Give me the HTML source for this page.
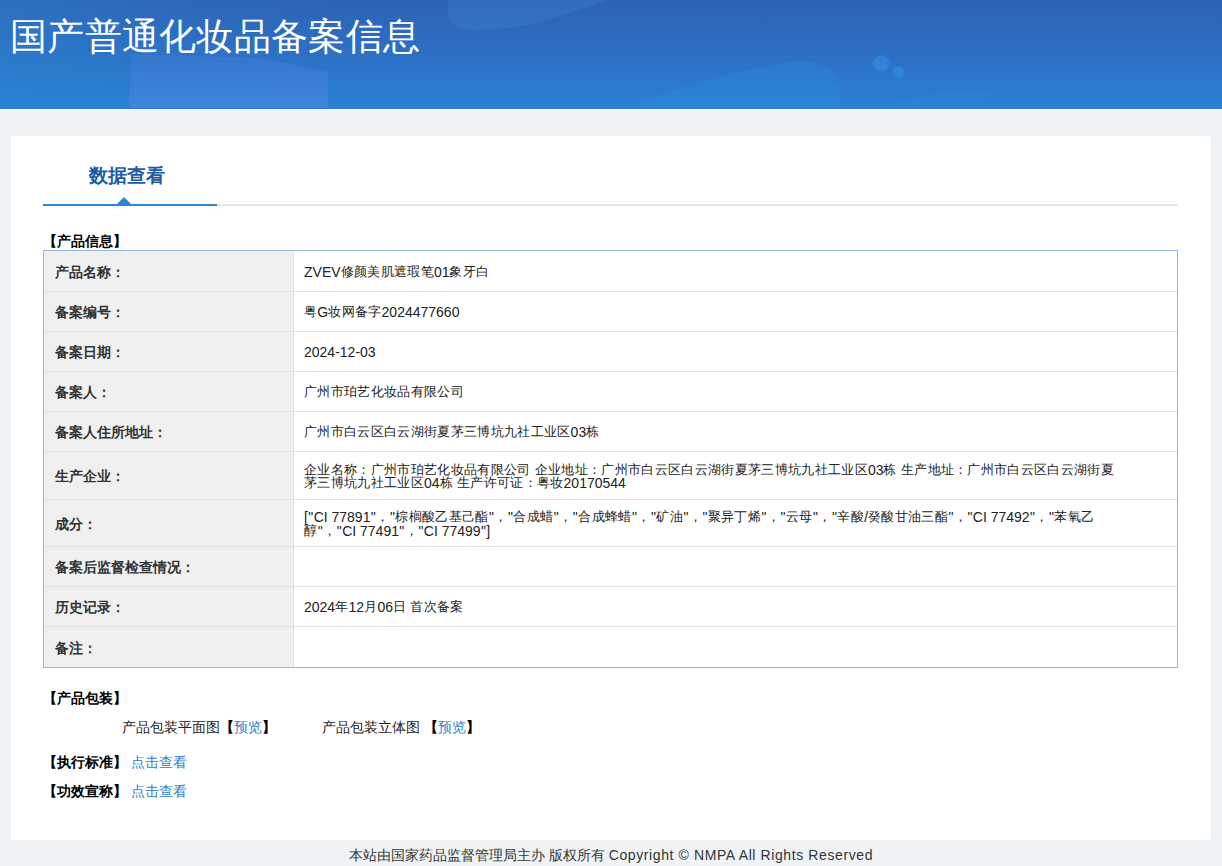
<!DOCTYPE html>
<html><head><meta charset="utf-8">
<style>
*{margin:0;padding:0;box-sizing:border-box}
html,body{width:1222px;height:866px;overflow:hidden}
body{background:#eff3f6;font-family:"Liberation Sans",sans-serif;color:#333;position:relative}
#hd{position:absolute;left:0;top:0;width:1222px;height:109px;border-bottom:1px solid #2a7ad8;background:linear-gradient(90deg,rgba(40,135,210,0.38) 0px,rgba(40,135,210,0.12) 200px,rgba(40,135,210,0) 420px),linear-gradient(180deg,#2e61b4 0%,#2d6fc4 50%,#2a80d4 100%);overflow:hidden}
#hd h1{position:absolute;left:10px;top:15px;font-size:37px;font-weight:500;color:#fff;line-height:44px;white-space:nowrap;letter-spacing:0.3px}
.sh{position:absolute}
#panel{position:absolute;left:11px;top:136px;width:1200px;height:704px;background:#fff}
#tab{position:absolute;left:89px;top:163px;font-size:19px;font-weight:bold;color:#1b5ca8;line-height:26px;white-space:nowrap}
#tabline{position:absolute;left:43px;top:204px;width:1135px;height:2px;background:#e6e6e6}
#tabact{position:absolute;left:43px;top:204px;width:174px;height:2px;background:#2c85d6}
#tri{position:absolute;left:117px;top:197px;width:0;height:0;border-left:7px solid transparent;border-right:7px solid transparent;border-bottom:7px solid #2c85d6}
.sec{position:absolute;font-size:14px;font-weight:bold;color:#000;line-height:20px;white-space:nowrap}
#tbl{position:absolute;left:43px;top:250px;width:1135px;height:418px;border:1px solid #93b6e3;background:#fff}
#lcol{position:absolute;left:44px;top:251px;width:249px;height:416px;background:#f0f0f0}
#vdiv{position:absolute;left:293px;top:251px;width:1px;height:416px;background:#e2e2e2}
.row{position:absolute;left:44px;width:1133px}
.row .l{position:absolute;left:11px;top:0;bottom:1px;display:flex;align-items:center;font-size:14px;font-weight:bold;color:#333;white-space:nowrap;line-height:14px;padding-top:2px}
.row .v{position:absolute;left:260px;top:0;bottom:1px;display:flex;align-items:center;font-size:13.33px;letter-spacing:0.33px;color:#222;white-space:nowrap;line-height:13.33px;padding-top:2px}
.lt{font-size:14px;letter-spacing:0;position:relative;top:1px}
.q{padding:0 .38px}
.rl{position:absolute;left:44px;width:1133px;height:1px;background:#e2e2e2}
.lnk{color:#2f80d2}
#foot{position:absolute;left:0;top:845px;width:1222px;text-align:center;font-size:14px;line-height:20px;color:#333;white-space:nowrap}
#foot span{letter-spacing:0.6px}
</style></head><body>
<div id="hd">
<svg class="sh" style="left:0;top:0" width="1222" height="108" viewBox="0 0 1222 108">
<defs><linearGradient id="g1" x1="0" y1="0" x2="0" y2="1"><stop offset="0" stop-color="rgb(90,130,230)" stop-opacity="0.22"/><stop offset="1" stop-color="rgb(90,140,235)" stop-opacity="0.42"/></linearGradient></defs>
<path d="M131,54 L262,58 L328,72 L328,108 L129,108 Z" fill="url(#g1)"/>
<path d="M448,0 L448,14 Q450,30 478,30 Q520,30 560,16 L610,0 Z" fill="rgba(60,135,215,0.28)"/>
<path d="M630,108 Q700,76 790,62 Q838,58 840,88 L840,108 Z" fill="rgba(50,150,225,0.22)"/>
<path d="M880,108 Q930,88 990,92 L985,108 Z" fill="rgba(50,150,225,0.10)"/>
<circle cx="881" cy="63.5" r="8" fill="rgba(55,150,240,0.45)"/>
<circle cx="898.5" cy="72.5" r="6" fill="rgba(55,150,240,0.45)"/>
</svg>
<h1>国产普通化妆品备案信息</h1>
</div>
<div style="position:absolute;left:0;top:109px;width:1222px;height:1px;background:#fbfcfd"></div>
<div id="panel"></div>
<div id="tab">数据查看</div>
<div id="tabline"></div><div id="tabact"></div><div id="tri"></div>
<div class="sec" style="left:43px;top:231px">【产品信息】</div>
<div id="tbl"></div>
<div id="lcol"></div>
<div id="vdiv"></div>
<div class="rl" style="top:291px"></div><div class="rl" style="top:331px"></div><div class="rl" style="top:371px"></div><div class="rl" style="top:411px"></div><div class="rl" style="top:451px"></div><div class="rl" style="top:499px"></div><div class="rl" style="top:546px"></div><div class="rl" style="top:586px"></div><div class="rl" style="top:626px"></div>
<div class="row" style="top:251px;height:40px"><div class="l">产品名称：</div><div class="v"><div><span class="lt">ZVEV</span>修颜美肌遮瑕笔<span class="lt">01</span>象牙白</div></div></div>
<div class="row" style="top:292px;height:39px"><div class="l">备案编号：</div><div class="v"><div>粤<span class="lt">G</span>妆网备字<span class="lt">2024477660</span></div></div></div>
<div class="row" style="top:332px;height:39px"><div class="l">备案日期：</div><div class="v"><div><span class="lt">2024-12-03</span></div></div></div>
<div class="row" style="top:372px;height:39px"><div class="l">备案人：</div><div class="v"><div>广州市珀艺化妆品有限公司</div></div></div>
<div class="row" style="top:412px;height:39px"><div class="l">备案人住所地址：</div><div class="v"><div>广州市白云区白云湖街夏茅三博坑九社工业区<span class="lt">03</span>栋</div></div></div>
<div class="row" style="top:452px;height:47px"><div class="l">生产企业：</div><div class="v"><div>企业名称：广州市珀艺化妆品有限公司 企业地址：广州市白云区白云湖街夏茅三博坑九社工业区<span class="lt">03</span>栋 生产地址：广州市白云区白云湖街夏<br>茅三博坑九社工业区<span class="lt">04</span>栋 生产许可证：粤妆<span class="lt">20170544</span></div></div></div>
<div class="row" style="top:500px;height:46px"><div class="l">成分：</div><div class="v"><div><span class="lt">[<span class=q>"</span>CI 77891<span class=q>"</span></span>，<span class="lt"><span class=q>"</span></span>棕榈酸乙基己酯<span class="lt"><span class=q>"</span></span>，<span class="lt"><span class=q>"</span></span>合成蜡<span class="lt"><span class=q>"</span></span>，<span class="lt"><span class=q>"</span></span>合成蜂蜡<span class="lt"><span class=q>"</span></span>，<span class="lt"><span class=q>"</span></span>矿油<span class="lt"><span class=q>"</span></span>，<span class="lt"><span class=q>"</span></span>聚异丁烯<span class="lt"><span class=q>"</span></span>，<span class="lt"><span class=q>"</span></span>云母<span class="lt"><span class=q>"</span></span>，<span class="lt"><span class=q>"</span></span>辛酸<span class="lt">/</span>癸酸甘油三酯<span class="lt"><span class=q>"</span></span>，<span class="lt"><span class=q>"</span>CI 77492<span class=q>"</span></span>，<span class="lt"><span class=q>"</span></span>苯氧乙<br>醇<span class="lt"><span class=q>"</span></span>，<span class="lt"><span class=q>"</span>CI 77491<span class=q>"</span></span>，<span class="lt"><span class=q>"</span>CI 77499<span class=q>"</span>]</span></div></div></div>
<div class="row" style="top:547px;height:39px"><div class="l">备案后监督检查情况：</div><div class="v"><div></div></div></div>
<div class="row" style="top:587px;height:39px"><div class="l">历史记录：</div><div class="v"><div><span class="lt">2024</span>年<span class="lt">12</span>月<span class="lt">06</span>日 首次备案</div></div></div>
<div class="row" style="top:627px;height:40px"><div class="l">备注：</div><div class="v"><div></div></div></div>
<div class="sec" style="left:43px;top:688px">【产品包装】</div>
<div class="sec" style="left:122px;top:717px;font-weight:normal;color:#222">产品包装平面图<b style="color:#000">【</b><span class="lnk">预览</span><b style="color:#000">】</b></div>
<div class="sec" style="left:322px;top:717px;font-weight:normal;color:#222">产品包装立体图 <b style="color:#000">【</b><span class="lnk">预览</span><b style="color:#000">】</b></div>
<div class="sec" style="left:43px;top:752px">【执行标准】 <span class="lnk" style="font-weight:normal">点击查看</span></div>
<div class="sec" style="left:43px;top:781px">【功效宣称】 <span class="lnk" style="font-weight:normal">点击查看</span></div>
<div id="foot">本站由国家药品监督管理局主办 版权所有 <span>Copyright © NMPA All Rights Reserved</span></div>
</body></html>
